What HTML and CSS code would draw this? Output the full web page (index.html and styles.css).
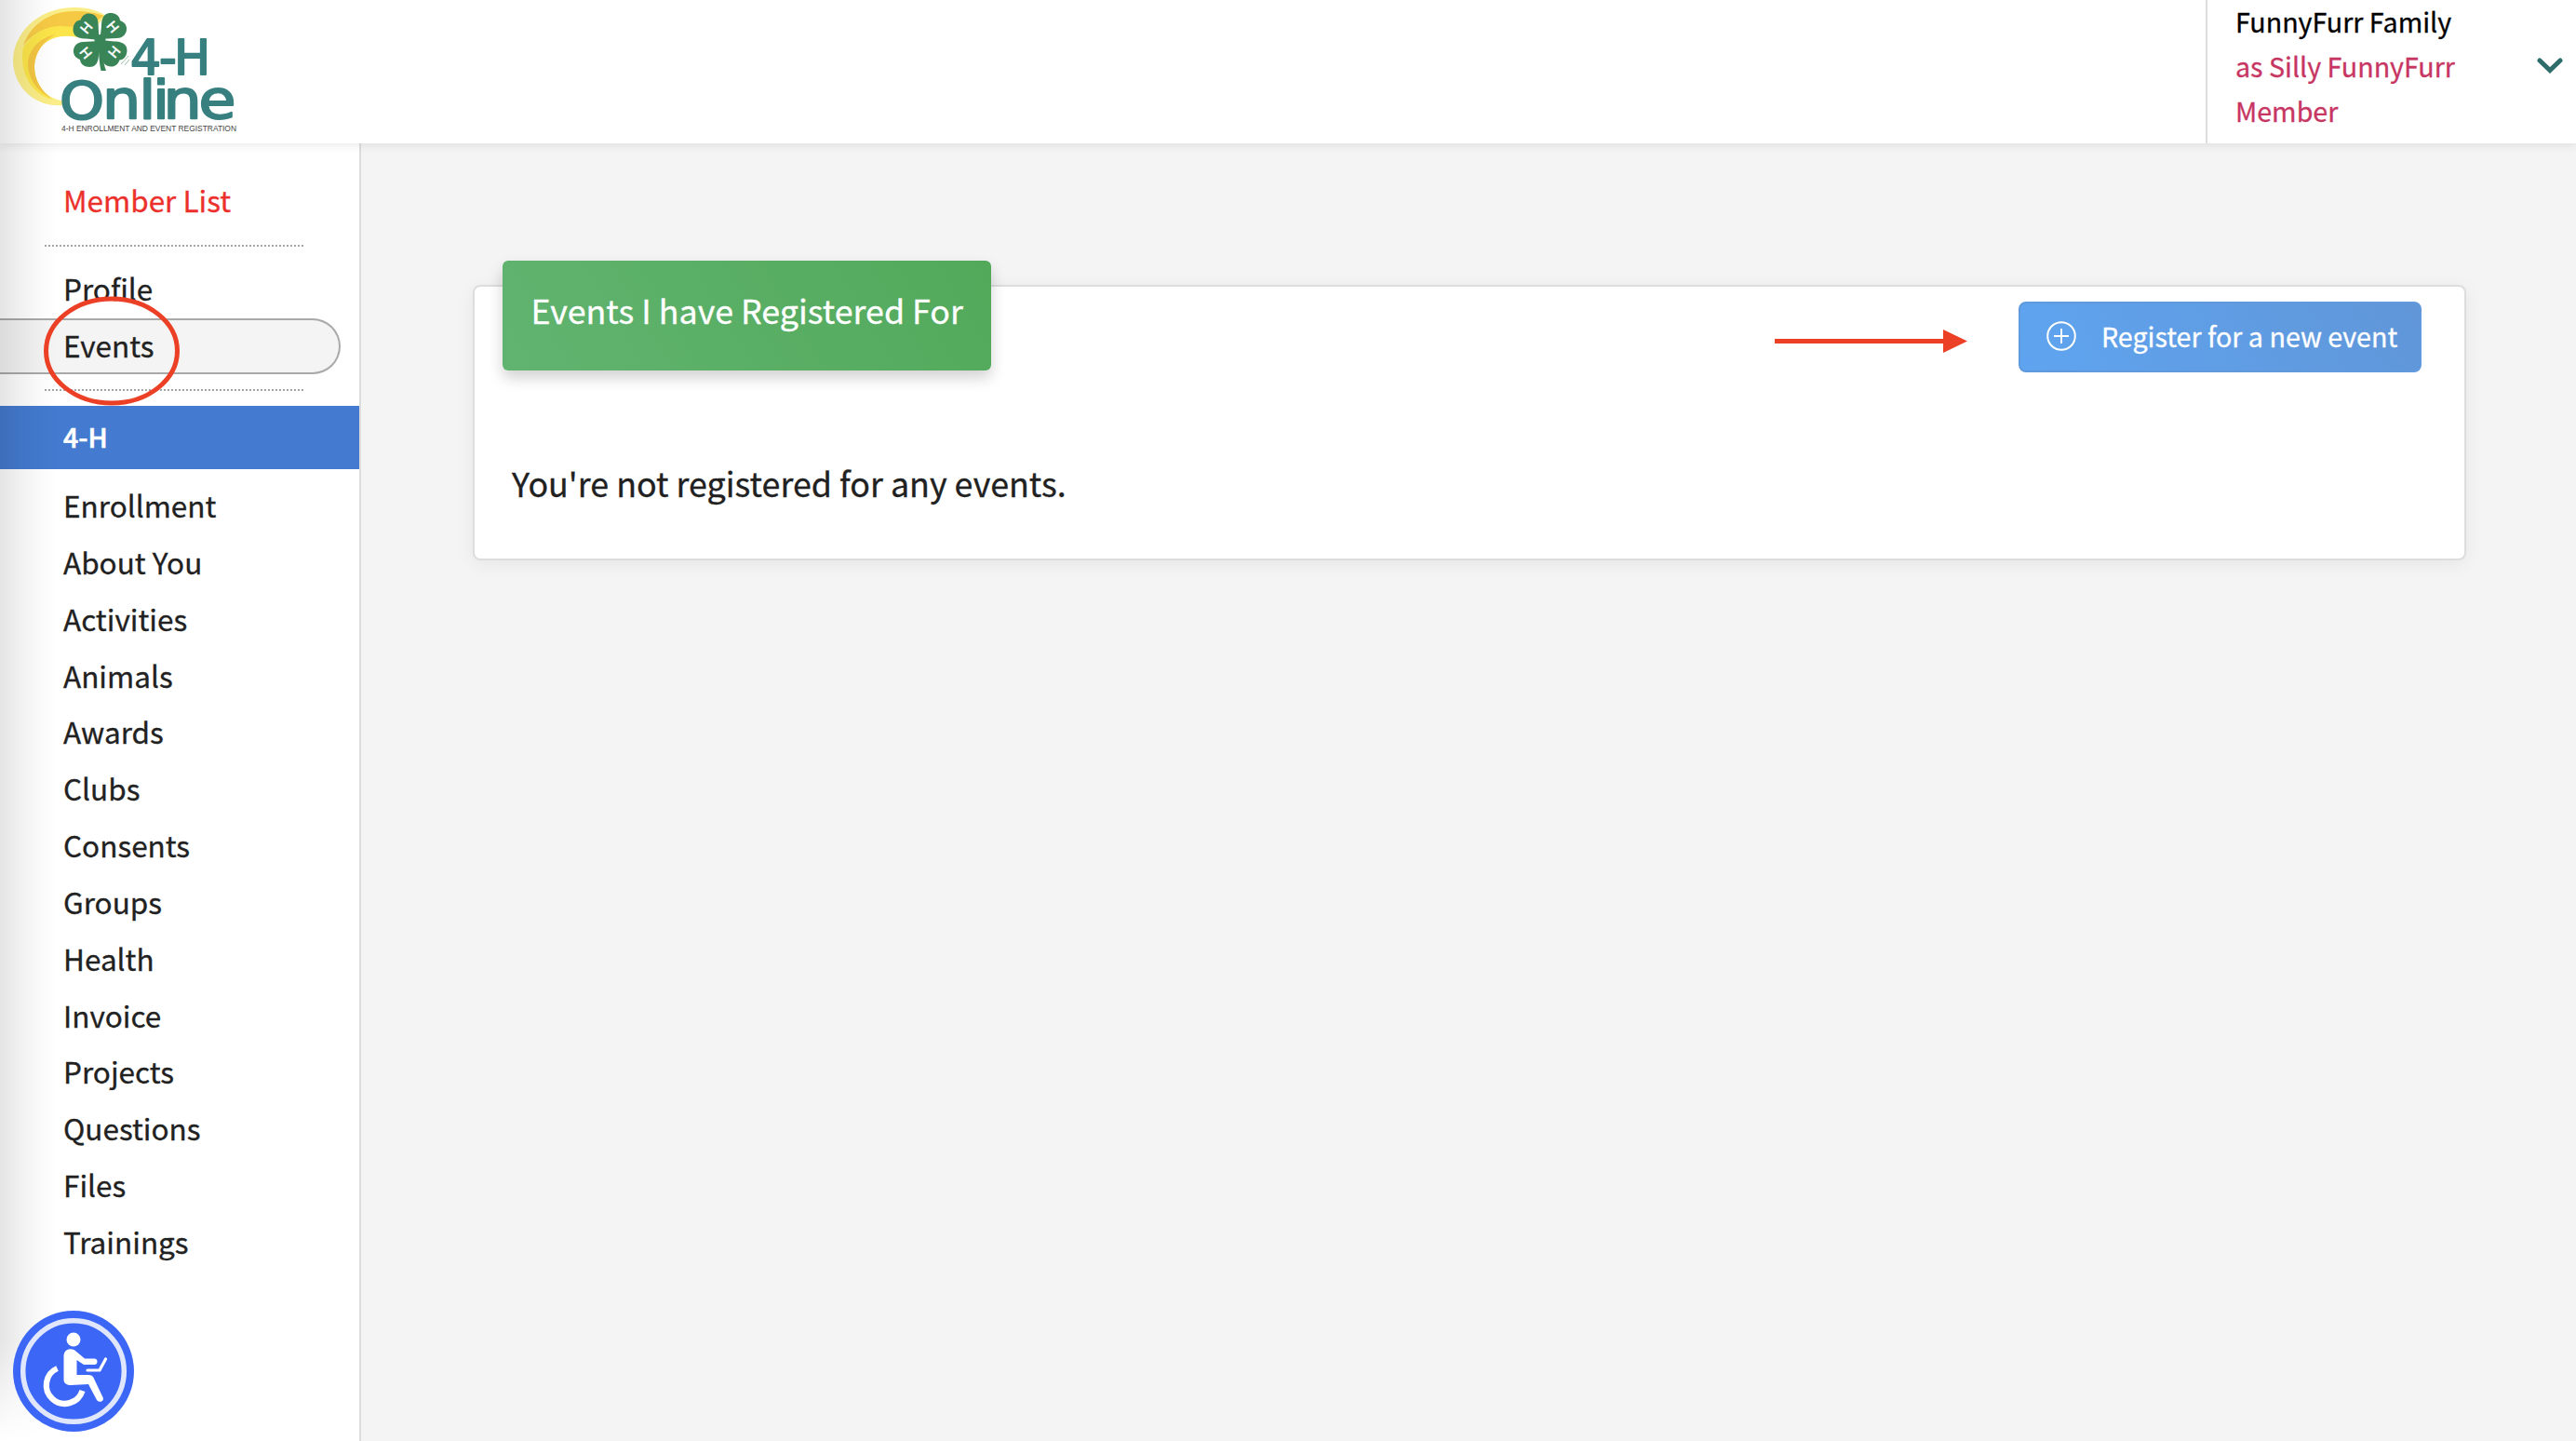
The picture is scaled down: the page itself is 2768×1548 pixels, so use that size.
FILE: index.html
```html
<!DOCTYPE html>
<html lang="en">
<head>
  <meta charset="UTF-8" />
  <meta name="viewport" content="width=device-width, initial-scale=1.0"/>
  <title>Events - 4-H Online</title>
  <link rel="stylesheet" href="styles.css">
</head>
<body>
  <header class="header">
    <a class="logo" href="#">
      <svg width="280" height="150" viewBox="0 0 280 150">
        <!-- moon -->
        <path fill="#fbee88" d="M114 17C102 9 90 8 78 8C40 9 14 36 14 66C15 94 38 116 68 113L68 108C50 107 37 90 37 71C38 52 52 38 72 38L92 41Z"/>
        <path fill="#f6c945" d="M25 49C32 28 52 12 80 12C92 12 104 14 112 17L84 36C60 24 40 30 25 49Z"/>
        <path fill="#fbe54a" d="M25 51C40 29 58 25 84 30L88 41C58 33 38 48 36 68C35 86 44 98 56 107C36 102 20 80 25 51Z"/>
        <path fill="#f4c643" d="M60 37C44 40 30 52 30 70C31 86 40 98 57 107C44 98 37 86 37 71C38 56 46 44 60 37Z"/>
        <!-- clover -->
        <g transform="translate(107.500 43)" fill="#3a8558">
          <path id="leaf" d="M-1 0L-2 -18C-2 -25 -7 -29 -13 -28.500C-18 -28 -20 -24 -21 -21.500C-28 -21 -30 -13 -28.500 -8C-27 -3 -21 -1.500 -15 -1.500Z"/>
          <use href="#leaf" transform="rotate(90)"/>
          <use href="#leaf" transform="rotate(180)"/>
          <use href="#leaf" transform="rotate(270)"/>
          <circle r="6"/>
          <path d="M-2.500 -3L3 -3C2 12 3 23 6.500 33L1 33C-1 24 -1.500 12 -2.500 -3Z"/>
        </g>
        <g class="leaf-text">
          <text transform="translate(93 30) rotate(-50)" y="5">H</text>
          <text transform="translate(121 29) rotate(50)" y="5">H</text>
          <text transform="translate(92 57) rotate(50)" y="5">H</text>
          <text transform="translate(123 56) rotate(-50)" y="5">H</text>
        </g>
        <path d="M130 69L138 60M134 70L139 64" stroke="#9cc4ab" stroke-width="1"/>
        <g class="logo-text">
          <text x="140 171 187" y="79.500" font-size="52">4-H</text>
          <text transform="translate(64 127) scale(1.09 1)" font-size="56">O</text>
          <text transform="translate(110 127) scale(1.14 1)" x="0 34.500" y="0" font-size="57">nl</text>
          <text transform="translate(164 127) scale(1.14 1)" x="0 10 43.500" y="0" font-size="57">ine</text>
        </g>
        <text class="logo-caption" x="66" y="141" textLength="188" lengthAdjust="spacingAndGlyphs">4-H ENROLLMENT AND EVENT REGISTRATION</text>
      </svg>
    </a>
    <div class="user">
      <div class="user-name">
        <div>FunnyFurr Family</div>
        <div class="role">as Silly FunnyFurr</div>
        <div class="role">Member</div>
      </div>
      <svg class="chevron" width="28" height="18" viewBox="0 0 28 18">
        <path d="M3 3L14 13.500L25 3" fill="none" stroke="#2f6d6c" stroke-width="5" stroke-linecap="round"/>
      </svg>
    </div>
  </header>

  <div class="layout">
    <nav class="sidebar">
      <a class="item member-list" href="#">Member List</a>
      <hr class="divider">
      <a class="item profile" href="#">Profile</a>
      <a class="item events" href="#">Events</a>
      <hr class="divider">
      <div class="section">4-H</div>
      <div class="menu">
        <a class="item" href="#">Enrollment</a>
        <a class="item" href="#">About You</a>
        <a class="item" href="#">Activities</a>
        <a class="item" href="#">Animals</a>
        <a class="item" href="#">Awards</a>
        <a class="item" href="#">Clubs</a>
        <a class="item" href="#">Consents</a>
        <a class="item" href="#">Groups</a>
        <a class="item" href="#">Health</a>
        <a class="item" href="#">Invoice</a>
        <a class="item" href="#">Projects</a>
        <a class="item" href="#">Questions</a>
        <a class="item" href="#">Files</a>
        <a class="item" href="#">Trainings</a>
      </div>
    </nav>

    <main class="content">
      <section class="card">
        <div class="card-top">
          <h2 class="card-title">Events I have Registered For</h2>
          <button class="btn">
            <svg width="32" height="32" viewBox="0 0 32 32" fill="none" stroke="#fff" stroke-width="2">
              <circle cx="16" cy="16" r="14.800"/>
              <path d="M16 8V24M8 16H24"/>
            </svg>
            <span>Register for a new event</span>
          </button>
        </div>
        <p class="empty">You're not registered for any events.</p>
      </section>
    </main>
  </div>

  <div class="edge-shade"></div>

  <!-- callouts -->
  <svg class="mark-circle" width="148" height="120" viewBox="0 0 148 120">
    <ellipse cx="74" cy="60" rx="70.500" ry="56" fill="none" stroke="#eb4025" stroke-width="5"/>
  </svg>
  <svg class="mark-arrow" width="208" height="26" viewBox="0 0 208 26" fill="#eb4025">
    <path d="M0 10H181V0L207 12.500L181 25V15H0Z"/>
  </svg>

  <button class="accessibility">
    <svg width="130" height="130" viewBox="0 0 130 130">
      <circle cx="65" cy="65" r="65" fill="#3c67f6"/>
      <circle cx="65" cy="65" r="54.300" fill="none" stroke="#e0e6fc" stroke-width="5.500"/>
      <circle cx="65" cy="31" r="7.500" fill="#fff"/>
      <path fill="#fff" d="M54.500 49C54.500 41 63 39.500 67.500 43.500L77 51.500H87.500C91.500 51.500 91.500 58 87.500 58H76L68.500 53V69H81C84 69 85.500 70 86.500 72L96.500 93C98.500 97.500 92.500 99.500 90 96L81 79L62 80C57 80 54.500 77.500 54.500 74Z"/>
      <path fill="none" stroke="#fff" stroke-width="3.200" stroke-linecap="round" stroke-linejoin="round" d="M80 64H93L99.500 52"/>
      <path fill="none" stroke="#fff" stroke-width="6.300" d="M47.500 62A19.800 19.800 0 1 0 74.500 86"/>
    </svg>
  </button>
</body>
</html>
```
FILE: styles.css
```css
* {
  box-sizing: border-box;
}
body {
  margin: 0;
  height: 1548px;
  display: flex;
  flex-direction: column;
  overflow: hidden;
  background-color: #f4f4f4;
  color: #212121;
  font-family: 'Noto Sans CJK JP', 'Noto Sans', sans-serif;
  -webkit-text-stroke: 0.3px;
}
a {
  color: inherit;
  text-decoration: none;
}
.header {
  flex: none;
  height: 154px;
  display: flex;
  justify-content: space-between;
  background-color: #fff;
  box-shadow: 0 2px 10px rgba(0,0,0,0.09);
  position: relative;
  z-index: 2;
}
.logo svg {
  display: block;
}
.logo-text {
  font-family: 'DejaVu Sans', sans-serif;
  fill: #388080;
  stroke: #388080;
  stroke-width: 2;
  stroke-linejoin: round;
}
.logo-caption {
  font-family: 'Liberation Sans', sans-serif;
  font-size: 8.5px;
  fill: #444;
}
.leaf-text {
  font-family: 'Liberation Sans', sans-serif;
  font-size: 15px;
  text-anchor: middle;
  fill: #fff;
  stroke: #fff;
  stroke-width: 0.5;
}
.user {
  width: 398px;
  border-left: 2px solid #ddd;
  padding: 0 14px 0 30px;
  display: flex;
  justify-content: space-between;
}
.user-name {
  margin-top: -1px;
  font-size: 28.65px;
  line-height: 48px;
  color: #000;
}
.user-name .role {
  color: #c73562;
}
.chevron {
  margin-top: 62px;
}

.layout {
  flex: 1;
  display: flex;
}
.sidebar {
  width: 388px;
  padding-top: 30px;
  background-color: #fff;
  border-right: 2px solid #ddd;
}
.item {
  display: block;
  height: 60.85px;
  line-height: 60px;
  padding-left: 68px;
  font-size: 31.5px;
}
.member-list {
  height: 60px;
  color: #ec312d;
}
.divider {
  width: 278px;
  margin: 19px 0 14px 48px;
  border: none;
  border-top: 2px dotted #a5a5a5;
}
.profile {
  height: 60px;
}
.events {
  width: 366px;
  height: 60px;
  margin-top: 3px;
  line-height: 52px;
  background-color: #f4f4f4;
  border: 2px solid #a9a9a9;
  border-left: none;
  border-radius: 0 30px 30px 0;
}
.events + .divider {
  margin: 16px 0 16px 48px;
}
.section {
  height: 68px;
  line-height: 66px;
  padding-left: 68px;
  background-color: #447bd0;
  color: #fff;
  font-size: 28.6px;
  font-weight: 500;
  -webkit-text-stroke: 0.6px;
}
.menu {
  padding-top: 8px;
}

.content {
  flex: 1;
  padding: 152px 118px 0 120px;
}
.card {
  height: 296px;
  padding: 0 46px 0 30px;
  background-color: #fff;
  border: 2px solid #ddd;
  border-radius: 8px;
  box-shadow: 0 4px 20px rgba(0,0,0,0.06);
}
.card-top {
  display: flex;
  justify-content: space-between;
  align-items: flex-start;
}
.card-title {
  width: 525px;
  height: 118px;
  margin: -28px 0 0;
  padding-left: 30.5px;
  line-height: 104px;
  background: linear-gradient(60deg, #61b470, #52a95a);
  border-radius: 6px;
  box-shadow: 0 8px 16px rgba(0,0,0,0.18);
  color: #fff;
  font-size: 35.8px;
  font-weight: 400;
}
.btn {
  width: 433px;
  height: 76px;
  margin-top: 16px;
  padding: 0 0 0 28px;
  display: flex;
  align-items: center;
  gap: 27px;
  background: linear-gradient(60deg, #5fa4f0, #6096d8);
  border: 2px solid #6099dc;
  border-radius: 8px;
  color: #fff;
  font-family: inherit;
  font-size: 28.65px;
  -webkit-text-stroke: 0.3px;
}
.btn svg {
  margin-top: -2px;
}
.btn span {
  margin-top: -3px;
  white-space: nowrap;
}
.empty {
  margin: 88px 0 0 10px;
  line-height: 60px;
  font-size: 35.85px;
}

/* soft shade along the left window edge */
.edge-shade {
  position: absolute;
  left: 0;
  top: 0;
  width: 64px;
  height: 1548px;
  z-index: 3;
  background: linear-gradient(to right, rgba(0,0,0,0.1), rgba(0,0,0,0.055) 35%, rgba(0,0,0,0.012) 75%, transparent);
  -webkit-mask-image: linear-gradient(to bottom, #000 1440px, transparent 1548px);
  mask-image: linear-gradient(to bottom, #000 1440px, transparent 1548px);
  pointer-events: none;
}
.mark-circle {
  position: absolute;
  left: 46px;
  top: 317px;
  z-index: 4;
}
.mark-arrow {
  position: absolute;
  left: 1907px;
  top: 354px;
  z-index: 4;
}
.accessibility {
  position: absolute;
  left: 14px;
  top: 1408px;
  z-index: 4;
  padding: 0;
  border: none;
  background: none;
}
.accessibility svg {
  display: block;
}
```
